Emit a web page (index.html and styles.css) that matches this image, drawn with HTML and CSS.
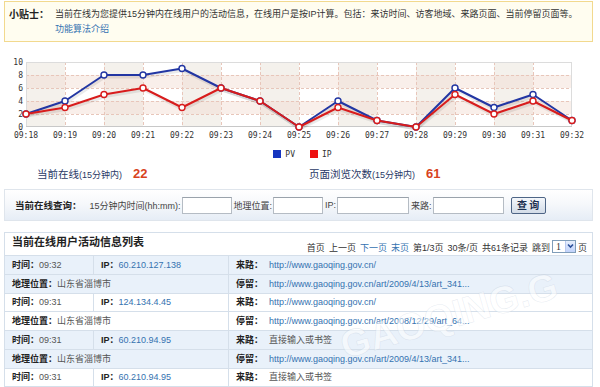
FILE: index.html
```html
<!DOCTYPE html>
<html lang="zh-CN">
<head>
<meta charset="utf-8">
<title>当前在线</title>
<link rel="stylesheet" href="styles.css">
</head>
<body>
<div class="page">
  <div class="tip">
    <span class="tip-label">小贴士：</span>
    <div class="tip-body">
      <p>当前在线为您提供15分钟内在线用户的活动信息，在线用户是按IP计算。包括：来访时间、访客地域、来路页面、当前停留页面等。</p>
      <a class="link" href="#">功能算法介绍</a>
    </div>
  </div>

  <svg class="chart" width="589" height="96" viewBox="4 48 589 96" xmlns="http://www.w3.org/2000/svg">
    <g fill="#f4f1ec">
      <rect x="26" y="62" width="39" height="65"/>
      <rect x="104" y="62" width="39" height="65"/>
      <rect x="182" y="62" width="39" height="65"/>
      <rect x="260" y="62" width="39" height="65"/>
      <rect x="338" y="62" width="39" height="65"/>
      <rect x="416" y="62" width="39" height="65"/>
      <rect x="494" y="62" width="39" height="65"/>
    </g>
    <g fill="#f3dcd2" opacity="0.45">
      <rect x="26" y="75" width="546" height="13"/>
      <rect x="26" y="101" width="546" height="13"/>
    </g>
    <g stroke="#e8c6ba" stroke-width="1" stroke-dasharray="3 2" fill="none">
      <path d="M65.5 62V127M104.5 62V127M143.5 62V127M182.5 62V127M221.5 62V127M260.5 62V127M299.5 62V127M338.5 62V127M377.5 62V127M416.5 62V127M455.5 62V127M494.5 62V127M533.5 62V127"/>
      <path d="M26 75.5H572M26 88.5H572M26 101.5H572M26 114.5H572"/>
    </g>
    <rect x="26.5" y="62.5" width="545" height="64" fill="none" stroke="#dcdcdc"/>
    <path d="M26 126.5H572" stroke="#c8c8c8"/>
    <g class="axis" text-anchor="end">
      <text x="23" y="65">10</text>
      <text x="23" y="78">8</text>
      <text x="23" y="91">6</text>
      <text x="23" y="104">4</text>
      <text x="23" y="117">2</text>
      <text x="23" y="130">0</text>
    </g>
    <g class="axis" text-anchor="middle">
      <text x="26" y="138">09:18</text>
      <text x="65" y="138">09:19</text>
      <text x="104" y="138">09:20</text>
      <text x="143" y="138">09:21</text>
      <text x="182" y="138">09:22</text>
      <text x="221" y="138">09:23</text>
      <text x="260" y="138">09:24</text>
      <text x="299" y="138">09:25</text>
      <text x="338" y="138">09:26</text>
      <text x="377" y="138">09:27</text>
      <text x="416" y="138">09:28</text>
      <text x="455" y="138">09:29</text>
      <text x="494" y="138">09:30</text>
      <text x="533" y="138">09:31</text>
      <text x="572" y="138">09:32</text>
    </g>
    <g fill="none" stroke="#000" stroke-opacity="0.08" stroke-width="3" transform="translate(1 2)">
      <polyline points="26,114 65,101 104,75 143,75 182,68.5 221,88 260,101 299,127 338,101 377,120.5 416,127 455,88 494,107.5 533,94.5 572,120.5"/>
      <polyline points="26,114 65,107.5 104,94.5 143,88 182,107.5 221,88 260,101 299,127 338,107.5 377,120.5 416,127 455,94.5 494,114 533,101 572,120.5"/>
    </g>
    <polyline fill="none" stroke="#2236a3" stroke-width="2" stroke-linejoin="round" points="26,114 65,101 104,75 143,75 182,68.5 221,88 260,101 299,127 338,101 377,120.5 416,127 455,88 494,107.5 533,94.5 572,120.5"/>
    <g fill="#fff" stroke="#2236a3" stroke-width="1.4">
      <circle cx="26" cy="114" r="3"/><circle cx="65" cy="101" r="3"/><circle cx="104" cy="75" r="3"/><circle cx="143" cy="75" r="3"/><circle cx="182" cy="68.5" r="3"/><circle cx="221" cy="88" r="3"/><circle cx="260" cy="101" r="3"/><circle cx="299" cy="127" r="3"/><circle cx="338" cy="101" r="3"/><circle cx="377" cy="120.5" r="3"/><circle cx="416" cy="127" r="3"/><circle cx="455" cy="88" r="3"/><circle cx="494" cy="107.5" r="3"/><circle cx="533" cy="94.5" r="3"/><circle cx="572" cy="120.5" r="3"/>
    </g>
    <polyline fill="none" stroke="#d81c1c" stroke-width="2" stroke-linejoin="round" points="26,114 65,107.5 104,94.5 143,88 182,107.5 221,88 260,101 299,127 338,107.5 377,120.5 416,127 455,94.5 494,114 533,101 572,120.5"/>
    <g fill="#fff" stroke="#d81c1c" stroke-width="1.4">
      <circle cx="26" cy="114" r="3"/><circle cx="65" cy="107.5" r="3"/><circle cx="104" cy="94.5" r="3"/><circle cx="143" cy="88" r="3"/><circle cx="182" cy="107.5" r="3"/><circle cx="221" cy="88" r="3"/><circle cx="260" cy="101" r="3"/><circle cx="299" cy="127" r="3"/><circle cx="338" cy="107.5" r="3"/><circle cx="377" cy="120.5" r="3"/><circle cx="416" cy="127" r="3"/><circle cx="455" cy="94.5" r="3"/><circle cx="494" cy="114" r="3"/><circle cx="533" cy="101" r="3"/><circle cx="572" cy="120.5" r="3"/>
    </g>
  </svg>

  <div class="legend">
    <span class="legend-item"><i class="swatch swatch-pv"></i>PV</span>
    <span class="legend-item"><i class="swatch swatch-ip"></i>IP</span>
  </div>

  <div class="stats">
    <div class="stat"><span class="stat-label">当前在线<small>(15分钟内)</small></span><b class="stat-num">22</b></div>
    <div class="stat"><span class="stat-label">页面浏览次数<small>(15分钟内)</small></span><b class="stat-num">61</b></div>
  </div>

  <form class="query">
    <b class="q-title">当前在线查询：</b>
    <label class="q-label">15分钟内时间(hh:mm):</label><input class="q-input w50" type="text">
    <label class="q-label">地理位置:</label><input class="q-input w50" type="text">
    <label class="q-label">IP:</label><input class="q-input w72" type="text">
    <label class="q-label">来路:</label><input class="q-input w70" type="text">
    <button class="q-btn" type="button">查 询</button>
  </form>

  <div class="list-head">
    <h2 class="list-title">当前在线用户活动信息列表</h2>
    <div class="pager">
      <span>首页</span><span>上一页</span><a class="link" href="#">下一页</a><a class="link" href="#">末页</a><span>第1/3页</span><span>30条/页</span><span>共61条记录</span><span class="jump">跳到<span class="fake-select"><span class="fs-val">1</span><span class="fs-btn"><svg width="9" height="10" viewBox="0 0 9 10"><path d="M2 3.5L4.5 6L7 3.5" fill="none" stroke="#2a4f9a" stroke-width="1.6"/></svg></span></span>页</span>
    </div>
  </div>

  <div class="list-wrap">
    <table class="list">
      <colgroup><col class="c1"><col class="c2"><col class="c3"></colgroup>
      <tbody>
        <tr class="alt">
          <td><b>时间：</b><span class="val">09:32</span></td>
          <td><b>IP：</b><a class="link" href="#">60.210.127.138</a></td>
          <td><b class="lab">来路：</b><a class="link" href="#">http://www.gaoqing.gov.cn/</a></td>
        </tr>
        <tr class="alt">
          <td colspan="2"><b>地理位置：</b><span class="val">山东省淄博市</span></td>
          <td><b class="lab">停留：</b><a class="link" href="#">http://www.gaoqing.gov.cn/art/2009/4/13/art_341...</a></td>
        </tr>
        <tr>
          <td><b>时间：</b><span class="val">09:31</span></td>
          <td><b>IP：</b><a class="link" href="#">124.134.4.45</a></td>
          <td><b class="lab">来路：</b><a class="link" href="#">http://www.gaoqing.gov.cn/</a></td>
        </tr>
        <tr>
          <td colspan="2"><b>地理位置：</b><span class="val">山东省淄博市</span></td>
          <td><b class="lab">停留：</b><a class="link" href="#">http://www.gaoqing.gov.cn/art/2008/12/29/art_64...</a></td>
        </tr>
        <tr class="alt">
          <td><b>时间：</b><span class="val">09:31</span></td>
          <td><b>IP：</b><a class="link" href="#">60.210.94.95</a></td>
          <td><b class="lab">来路：</b><span class="val">直接输入或书签</span></td>
        </tr>
        <tr class="alt">
          <td colspan="2"><b>地理位置：</b><span class="val">山东省淄博市</span></td>
          <td><b class="lab">停留：</b><a class="link" href="#">http://www.gaoqing.gov.cn/art/2009/4/13/art_341...</a></td>
        </tr>
        <tr>
          <td><b>时间：</b><span class="val">09:31</span></td>
          <td><b>IP：</b><a class="link" href="#">60.210.94.95</a></td>
          <td><b class="lab">来路：</b><span class="val">直接输入或书签</span></td>
        </tr>
      </tbody>
    </table>
    <div class="watermark">GAOQING.G</div>
  </div>
</div>
</body>
</html>
```

FILE: styles.css
```css
* { box-sizing: border-box; }

body {
  margin: 0;
  background: #fff;
  color: #333;
  font-family: "Liberation Sans", "Noto Sans CJK SC", sans-serif;
  font-size: 9px;
  overflow: hidden;
}

.page {
  width: 589px;
  margin-left: 4px;
}

.link { color: #3572b0; text-decoration: none; }

/* tip */
.tip {
  display: flex;
  margin-top: 1px;
  height: 41px;
  padding: 5px 0 0 4px;
  border: 1px solid #f2d98e;
  background: #fffdf0;
  line-height: 15px;
}
.tip-label { width: 46px; font-weight: bold; font-size: 10px; color: #222; }
.tip-body p { margin: 0; color: #333; }

/* chart */
.chart { display: block; margin-top: 6px; }
.axis { font-family: "DejaVu Sans Mono", monospace; font-size: 8px; fill: #333; }

/* legend */
.legend {
  display: flex;
  justify-content: center;
  gap: 15px;
  height: 12px;
  margin-top: 4px;
  padding-left: 8px;
  align-items: center;
  font-family: "DejaVu Sans Mono", monospace;
  font-size: 8px;
  color: #333;
}
.legend-item { display: flex; align-items: center; }
.swatch { display: inline-block; width: 8px; height: 8px; margin-right: 4px; }
.swatch-pv { background: #1535c0; }
.swatch-ip { background: #ee1111; }

/* stats */
.stats {
  display: flex;
  height: 26px;
  padding-left: 33px;
  align-items: center;
}
.stat { display: flex; align-items: center; width: 272px; }
.stat-label { font-size: 10.5px; color: #2a3966; }
.stat-label small { font-size: 9px; }
.stat-num { margin-left: 11px; font-size: 13px; color: #d8431d; font-weight: bold; }

/* query */
.query {
  display: flex;
  align-items: center;
  height: 32px;
  margin: 3px 0 0;
  padding-left: 10px;
  border: 1px solid #dfe5ec;
  background: linear-gradient(to bottom, #ffffff 0%, #f6f8fb 45%, #e6edf6 100%);
}
.q-title { font-size: 9.5px; color: #222; margin-right: 8px; }
.q-label { color: #444; margin-right: 1px; }
.q-input {
  height: 17px;
  margin: 0 2px 0 0;
  padding: 0;
  border: 1px solid #b5bcc4;
  border-top-color: #9aa2ab;
  background: #fff;
}
.w50 { width: 50px; }
.w72 { width: 72px; }
.w70 { width: 71px; }
.q-btn {
  height: 17px;
  width: 35px;
  margin-left: 5px;
  padding: 0;
  border: 1px solid #4e6586;
  border-radius: 2px;
  background: linear-gradient(to bottom, #f4f7fb, #d3dce8);
  color: #1c3050;
  font: bold 10px "Noto Sans CJK SC", sans-serif;
  line-height: 14px;
}

/* list head */
.list-head {
  display: flex;
  justify-content: space-between;
  height: 23px;
  margin-top: 11px;
  border: 1px solid #d5dfea;
  border-bottom: none;
  background: #fff;
}
.list-title {
  margin: 0;
  padding: 1px 0 0 7px;
  font-size: 11px;
  line-height: 16px;
  color: #222;
}
.pager {
  display: flex;
  align-items: center;
  gap: 4px;
  padding: 6px 5px 0 0;
  color: #333;
  height: 22px;
}
.jump { display: flex; align-items: center; }
.fake-select {
  display: inline-flex;
  height: 13px;
  width: 24px;
  margin: 0 2px;
  border: 1px solid #7f9db9;
  background: #fff;
  position: relative;
  top: -1px;
}
.fs-val { flex: 1; padding-left: 3px; line-height: 11px; font-family: "Liberation Serif", serif; font-size: 10px; }
.fs-btn {
  width: 10px;
  display: flex;
  align-items: center;
  justify-content: center;
  background: linear-gradient(to bottom, #e6eefc, #c1d3fb);
  border-left: 1px solid #b9c9ef;
}

/* list table */
.list-wrap {
  position: relative;
  overflow: hidden;
}
.list {
  width: 589px;
  border-collapse: collapse;
  table-layout: fixed;
}
.c1 { width: 89px; }
.c2 { width: 135px; }
.list tr { height: 18.75px; }
.list td {
  padding: 0 0 0 7px;
  border: 1px solid #d5dfea;
  white-space: nowrap;
  overflow: hidden;
  line-height: 14px;
}
.list tr.alt td { background: #e9f1fa; }
.list b { color: #222; }
.lab { display: inline-block; width: 33px; }
.val { color: #555; }

.watermark {
  position: absolute;
  left: 332px;
  top: 72px;
  font: bold 38px "Liberation Sans", sans-serif;
  line-height: 40px;
  color: rgba(255, 255, 255, 0.55);
  -webkit-text-stroke: 0.6px rgba(150, 170, 195, 0.22);
  transform: rotate(-16deg);
  transform-origin: left top;
  white-space: nowrap;
  pointer-events: none;
}
```
